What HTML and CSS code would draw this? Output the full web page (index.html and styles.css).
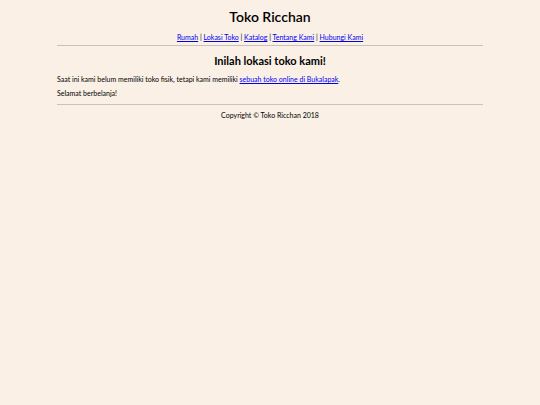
FILE: index.html
```html
<!DOCTYPE html>
<html>
<head>
<meta charset="utf-8">
<link rel="stylesheet" href="styles.css">
</head>
<body>
<div class="page">
  <header class="top">
    <h1 class="title">Toko Ricchan</h1>
    <nav class="nav"><a href="#">Rumah</a> | <a href="#">Lokasi Toko</a> | <a href="#">Katalog</a> | <a href="#">Tentang Kami</a> | <a href="#">Hubungi Kami</a></nav>
  </header>
  <hr class="rule">
  <main class="content">
    <h2 class="heading">Inilah lokasi toko kami!</h2>
    <p class="text">Saat ini kami belum memiliki toko fisik, tetapi kami memiliki <a href="#">sebuah toko online di Bukalapak</a>.</p>
    <p class="text">Selamat berbelanja!</p>
  </main>
  <hr class="rule">
  <footer class="foot">Copyright © Toko Ricchan 2018</footer>
</div>
</body>
</html>
```
FILE: styles.css
```css
html, body {
  margin: 0;
  padding: 0;
  background: #faf0e6;
}
body {
  font-family: Lato, "DejaVu Sans", sans-serif;
  color: #000;
}
.page {
  width: 426px;
  margin: 0 auto;
  padding-top: 8px;
}
.top {
  text-align: center;
}
.title {
  margin: 0;
  font-size: 14px;
  font-weight: 600;
  line-height: 18px;
}
.nav {
  margin-top: 6px;
  font-size: 7px;
  line-height: 10px;
}
a {
  color: #0000ee;
}
.rule {
  margin: 3px 0 0;
  border: 0;
  border-top: 1px solid #c8c2bd;
  height: 0;
}
.content {
  padding-top: 8px;
}
.heading {
  margin: 0;
  text-align: center;
  font-size: 11px;
  line-height: 14px;
}
.text {
  font-size: 7px;
  line-height: 9px;
  margin: 7px 0 0;
}
.content .text + .text {
  margin-top: 5px;
}
.content + .rule {
  margin-top: 6px;
}
.foot {
  text-align: center;
  font-size: 7px;
  line-height: 9px;
  margin-top: 6px;
}
```
